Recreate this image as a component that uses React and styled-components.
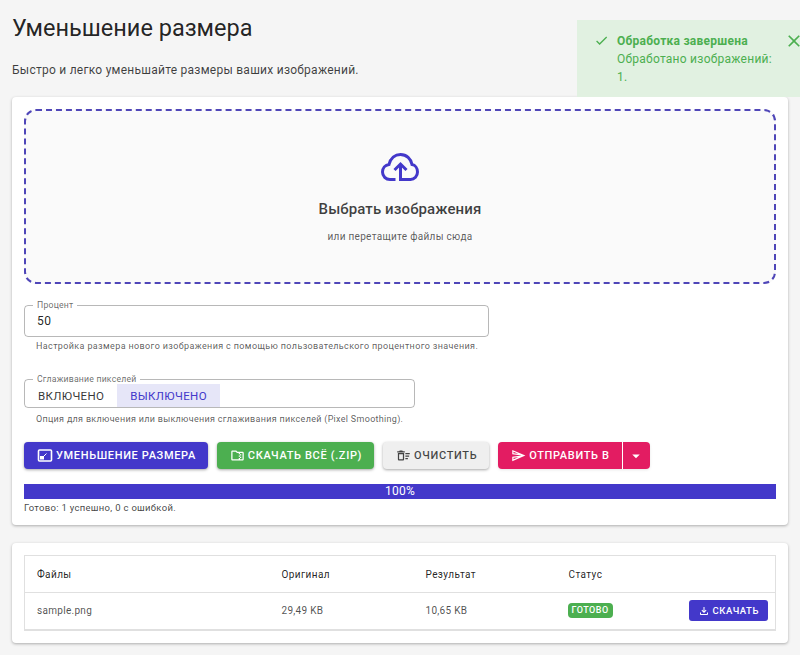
import React from 'react'
import styled, { createGlobalStyle } from 'styled-components'
import {
	MdArrowDropDown,
	MdCheck,
	MdClose,
	MdOutlineDeleteSweep,
	MdOutlineFileDownload,
	MdOutlineFolderZip,
	MdOutlineSend,
} from 'react-icons/md'

const GlobalStyle = createGlobalStyle`
  html, body {
    margin: 0;
    padding: 0;
    background: #f5f5f5;
  }
  body {
    font-family: Roboto, "Noto Sans", sans-serif;
    color: rgba(0, 0, 0, 0.87);
    overflow: hidden;
  }
  * {
    box-sizing: border-box;
  }
`

const Page = styled.div`
  width: 800px;
  height: 655px;
  padding: 12px 12px 0;
  position: relative;
  overflow: hidden;
`

const Title = styled.h1`
  margin: 0;
  font-size: 23.5px;
  font-weight: 400;
  line-height: 32px;
`

const Subtitle = styled.p`
  margin: 17px 0 0;
  font-size: 12px;
  line-height: 18px;
  letter-spacing: 0.25px;
  color: rgba(0, 0, 0, 0.75);
`

const Card = styled.section`
  background: #fff;
  border-radius: 4px;
  padding: 12px 12px ${p => p.$bottom}px;
  margin-top: ${p => p.$top}px;
  box-shadow: 0 1px 3px rgba(0, 0, 0, 0.3);
`

const DropZone = styled.div`
  height: 175px;
  border: 2px dashed #4f46b8;
  border-radius: 12px;
  background: #fafafa;
  display: flex;
  flex-direction: column;
  align-items: center;
  padding-top: 42px;
  color: #4338ca;
`

const DropTitle = styled.div`
  margin-top: 18px;
  font-size: 15px;
  font-weight: 500;
  line-height: 20px;
  letter-spacing: 0.1px;
  color: rgba(0, 0, 0, 0.75);
`

const DropHint = styled.div`
  margin-top: 10px;
  font-size: 10px;
  line-height: 16px;
  letter-spacing: 0.3px;
  color: rgba(0, 0, 0, 0.65);
`

const Fieldset = styled.fieldset`
  margin: ${p => p.$top}px 0 0;
  padding: 0;
  width: ${p => p.$width}px;
  height: ${p => p.$height}px;
  border: 1px solid rgba(0, 0, 0, 0.28);
  border-radius: 4px;
  display: flex;
  min-inline-size: auto;
`

const Legend = styled.legend`
  margin-left: 8px;
  padding: 0 4px;
  font-size: 8.7px;
  line-height: 9px;
  letter-spacing: 0.2px;
  color: rgba(0, 0, 0, 0.6);
`

const InputValue = styled.div`
  padding: 2px 12px;
  font-size: 12px;
  line-height: 18px;
  letter-spacing: 0.4px;
`

const Toggle = styled.div`
  padding: 0 13px;
  height: 100%;
  display: flex;
  align-items: center;
  font-size: 11.5px;
  letter-spacing: 0.35px;
  color: ${p => (p.$active ? '#4338ca' : 'rgba(0, 0, 0, 0.8)')};
  background: ${p => (p.$active ? '#e6e6f8' : 'transparent')};
`

const Helper = styled.div`
  margin: ${p => p.$top}px 0 0 12px;
  font-size: 9px;
  line-height: 14px;
  letter-spacing: ${p => p.$spacing}px;
  color: rgba(0, 0, 0, 0.65);
`

const Actions = styled.div`
  display: flex;
  gap: 9px;
  margin-top: 16px;
`

const Button = styled.button`
  height: 27px;
  padding: 0 12px 0 13px;
  border: 0;
  border-radius: 4px;
  display: flex;
  align-items: center;
  gap: 3px;
  font-family: inherit;
  font-size: 11px;
  font-weight: 500;
  letter-spacing: 0.65px;
  text-transform: uppercase;
  color: ${p => p.$color || '#fff'};
  background: ${p => p.$bg};
  box-shadow: 0 1px 3px rgba(0, 0, 0, 0.35);
  svg {
    font-size: 15px;
  }
`

const SplitGroup = styled.div`
  display: flex;
  border-radius: 4px;
  box-shadow: 0 1px 3px rgba(0, 0, 0, 0.1);
`

const SplitMain = styled(Button)`
  border-radius: 4px 0 0 4px;
  border-right: 1px solid #fff;
  box-shadow: none;
`

const SplitArrow = styled(Button)`
  border-radius: 0 4px 4px 0;
  box-shadow: none;
  padding: 0 4.5px;
  svg {
    font-size: 18px;
  }
`

const Progress = styled.div`
  margin-top: 15px;
  height: 15px;
  background: #4338ca;
  color: #fff;
  font-size: 12px;
  line-height: 15px;
  letter-spacing: 0.3px;
  text-align: center;
`

const ProgressNote = styled.div`
  margin-top: 2px;
  font-size: 9.5px;
  line-height: 14px;
  letter-spacing: 0.3px;
  color: rgba(0, 0, 0, 0.75);
`

const FileTable = styled.table`
  width: 100%;
  border-collapse: collapse;
  border: 1px solid #e0e0e0;
  border-bottom-width: 2px;
  table-layout: fixed;
`

const HeadCell = styled.th`
  height: 37px;
  padding: 0 12px;
  text-align: left;
  font-size: 10px;
  font-weight: 400;
  letter-spacing: 0.4px;
  color: rgba(0, 0, 0, 0.87);
  border-bottom: 1px solid #e0e0e0;
  width: ${p => p.$width || 'auto'};
`

const Cell = styled.td`
  height: 37px;
  padding: 0 12px;
  font-size: 10px;
  letter-spacing: 0.3px;
  color: rgba(0, 0, 0, 0.7);
  text-align: ${p => p.$align || 'left'};
  padding-right: ${p => p.$pr || 12}px;
`

const Chip = styled.span`
  display: inline-block;
  height: 15px;
  padding: 0 4px;
  border-radius: 4px;
  background: #4caf50;
  color: #fff;
  font-size: 9px;
  font-weight: 500;
  line-height: 15px;
  letter-spacing: 0.5px;
  margin-left: -1px;
`

const SmallButton = styled.button`
  height: 21px;
  padding: 0 9px;
  display: inline-flex;
  align-items: center;
  gap: 3px;
  border: 0;
  border-radius: 3px;
  background: #4338ca;
  color: #fff;
  font-family: inherit;
  font-size: 9.5px;
  font-weight: 500;
  letter-spacing: 0.55px;
  text-transform: uppercase;
  svg {
    font-size: 12px;
  }
`

const Toast = styled.div`
  position: absolute;
  top: 20px;
  left: 577px;
  width: 240px;
  height: 77px;
  background: #e1f1e1;
  color: #4caf50;
  display: flex;
  padding: 12px 0 0 17px;
  font-size: 12px;
  line-height: 18px;
  letter-spacing: 0.25px;
`

const ToastIcon = styled(MdCheck)`
  font-size: 15px;
  margin-top: 1px;
  flex: none;
`

const ToastBody = styled.div`
  margin-left: 8px;
  width: 155px;
`

const ToastTitle = styled.div`
  font-weight: 700;
`

const ToastClose = styled(MdClose)`
  font-size: 20px;
  flex: none;
  margin: -1px 0 0 12px;
`

const CloudIcon = () => (
	<svg width="38" height="28" viewBox="0 0 38 28" fill="none" stroke="currentColor" strokeWidth="3">
		<path d="M14.5 26.5H9C4.8 26.5 1.5 23.2 1.5 19C1.5 15.2 4.2 12 8 11.5C9.5 5.5 14 1.5 19.5 1.5C25.5 1.5 30 6 31 11.5C34.2 12 36.5 15.2 36.5 19C36.5 23.2 33.5 26.5 29.5 26.5H19.5V11" />
		<path d="M13.5 17L19.5 11L25.5 17" />
	</svg>
)

const ResizeIcon = () => (
	<svg width="16" height="15" viewBox="0 0 16 15" fill="none">
		<rect x="1.5" y="2" width="13" height="11" rx="1" stroke="currentColor" strokeWidth="1.6" />
		<path d="M3 11.5V8L7 8L7 11.5Z" fill="currentColor" />
		<path d="M7 8L9.5 5.5" stroke="currentColor" strokeWidth="1" />
	</svg>
)

const App = () => {
	return (
		<Page>
			<GlobalStyle />
			<Title>Уменьшение размера</Title>
			<Subtitle>Быстро и легко уменьшайте размеры ваших изображений.</Subtitle>

			<Card $top={18} $bottom={10}>
				<DropZone>
					<CloudIcon />
					<DropTitle>Выбрать изображения</DropTitle>
					<DropHint>или перетащите файлы сюда</DropHint>
				</DropZone>

				<Fieldset $top={17} $width={465} $height={36}>
					<Legend>Процент</Legend>
					<InputValue>50</InputValue>
				</Fieldset>
				<Helper $top={2} $spacing={0.37}>
					Настройка размера нового изображения с помощью пользовательского
					процентного значения.
				</Helper>

				<Fieldset $top={22} $width={391} $height={33}>
					<Legend>Сглаживание пикселей</Legend>
					<Toggle>ВКЛЮЧЕНО</Toggle>
					<Toggle $active>ВЫКЛЮЧЕНО</Toggle>
				</Fieldset>
				<Helper $top={4} $spacing={0.3}>
					Опция для включения или выключения сглаживания пикселей (Pixel
					Smoothing).
				</Helper>

				<Actions>
					<Button $bg="#4338ca">
						<ResizeIcon />
						Уменьшение размера
					</Button>
					<Button $bg="#4caf50">
						<MdOutlineFolderZip />
						Скачать всё (.zip)
					</Button>
					<Button $bg="#efefef" $color="rgba(0, 0, 0, 0.72)">
						<MdOutlineDeleteSweep />
						Очистить
					</Button>
					<SplitGroup>
						<SplitMain $bg="#e31c62">
							<MdOutlineSend />
							Отправить в
						</SplitMain>
						<SplitArrow $bg="#e31c62">
							<MdArrowDropDown />
						</SplitArrow>
					</SplitGroup>
				</Actions>

				<Progress>100%</Progress>
				<ProgressNote>Готово: 1 успешно, 0 с ошибкой.</ProgressNote>
			</Card>

			<Card $top={18} $bottom={12}>
				<FileTable>
					<thead>
						<tr>
							<HeadCell $width="245px">Файлы</HeadCell>
							<HeadCell $width="144px">Оригинал</HeadCell>
							<HeadCell $width="143px">Результат</HeadCell>
							<HeadCell $width="100px">Статус</HeadCell>
							<HeadCell />
						</tr>
					</thead>
					<tbody>
						<tr>
							<Cell>sample.png</Cell>
							<Cell>29,49 KB</Cell>
							<Cell>10,65 KB</Cell>
							<Cell>
								<Chip>ГОТОВО</Chip>
							</Cell>
							<Cell $align="right" $pr={7}>
								<SmallButton>
									<MdOutlineFileDownload />
									Скачать
								</SmallButton>
							</Cell>
						</tr>
					</tbody>
				</FileTable>
			</Card>

			<Toast>
				<ToastIcon />
				<ToastBody>
					<ToastTitle>Обработка завершена</ToastTitle>
					Обработано изображений: 1.
				</ToastBody>
				<ToastClose />
			</Toast>
		</Page>
	)
}

export default App
